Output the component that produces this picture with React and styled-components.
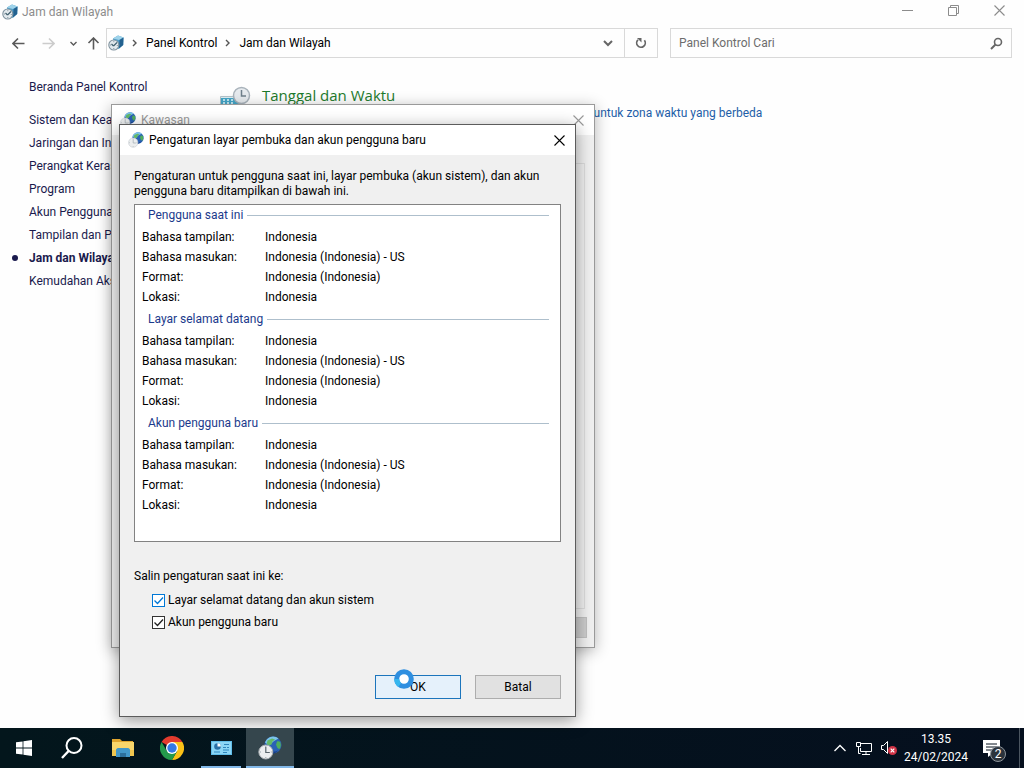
import React, { useState } from "react";
import styled, { createGlobalStyle } from "styled-components";

const sidebarLinks = [
  "Sistem dan Keamanan",
  "Jaringan dan Internet",
  "Perangkat Keras dan Suara",
  "Program",
  "Akun Pengguna",
  "Tampilan dan Personalisasi",
  "Jam dan Wilayah",
  "Kemudahan Akses",
];

const groups = ["Pengguna saat ini", "Layar selamat datang", "Akun pengguna baru"];

const settings = [
  ["Bahasa tampilan:", "Indonesia"],
  ["Bahasa masukan:", "Indonesia (Indonesia) - US"],
  ["Format:", "Indonesia (Indonesia)"],
  ["Lokasi:", "Indonesia"],
];

// Icons
const ClockBoxIcon = ({ size = 16 }) => (
  <svg width={size} height={size} viewBox="0 0 16 16" aria-hidden="true">
    <path d="M5 3.500 10 .5l5.500 2-.3 7.500L10.500 14 6 12z" fill="#4f9fca" />
    <path d="M5 3.500 10 .5l5.500 2L11 5z" fill="#9fd3ea" />
    <path d="m11.500 5 4-2.500-.3 7.500-4.200 3.500z" fill="#23618f" />
    <circle cx="5.800" cy="10" r="5" fill="#e3eaee" stroke="#7f929e" strokeWidth="1.100" />
    <path d="M5.500 11 9 7.500M5.500 11l-2-2" stroke="#42616f" strokeWidth="1.200" fill="none" />
    <path d="M5.800 6.200v1M5.800 13v1M2 10h1M8.800 10.500h1" stroke="#6c7f8a" strokeWidth=".8" />
  </svg>
);

const GlobeClockIcon = ({ size = 16, faded = false }) => (
  <svg width={size} height={size} viewBox="0 0 24 24" aria-hidden="true">
    <circle cx="15" cy="9" r="8.500" fill="#2b62b4" />
    <path d="M7 6.500C8.500 3 11.500.6 15 .5c2.500 0 4 .8 5.500 2L16 5l-5 4.500z" fill="#7cc4ea" />
    <path d="M9.500 4.500 14 2.500l3 1-2.500 2-1 3-2.500 1-2.500-1.500z" fill="#63b867" />
    <path d="M19 5.500c1.500-.5 2.500 0 3.300.8 1 2.700.5 5-1 7l-2-1.500-1.300-3z" fill="#4fae5c" />
    <path d="M12 14.500c3 1.500 6 1.500 8.500-.5-1.500 2.500-4 3.500-6.500 3.500z" fill="#173f8a" />
    <circle cx="7.800" cy="16" r="7" fill="#eceeef" stroke={faded ? "#cbd0d4" : "#a9aeb2"} />
    <path d="M7.800 11v5.500h4" stroke={faded ? "#a9b3b9" : "#59646b"} strokeWidth="1.200" fill="none" />
    <path d="M7.800 10v1M7.800 21v1M2 16h1M12.800 16h1" stroke="#9aa4aa" />
  </svg>
);

const DateTimeIcon = () => (
  <svg width="32" height="32" viewBox="0 0 32 32" aria-hidden="true">
    <path d="M1.500 16.500h20v12h-20z" fill="#dfeef3" stroke="#b3c3ca" />
    <path d="M2 18h19v6H2z" fill="#45a7c9" />
    <path d="M4 20h2M8 20h2M12 20h2M4 23h2M8 23h2M12 23h2" stroke="#e9fbff" strokeWidth="1.500" />
    <circle cx="22.500" cy="15.500" r="8" fill="#e6eaee" stroke="#a9b3bb" strokeWidth="1.500" />
    <path d="M22.500 10v6h4.500" stroke="#6f7f8b" strokeWidth="1.500" fill="none" />
  </svg>
);

const CloseIcon = () => (
  <svg width="11" height="11" viewBox="0 0 11 11" aria-hidden="true">
    <path d="m.5.500 10 10M10.500.500l-10 10" stroke="currentColor" strokeWidth="1.100" />
  </svg>
);

const ChevronIcon = ({ width = 2 }) => (
  <svg width="10" height="10" viewBox="0 0 10 10" aria-hidden="true">
    <path d="m1 3 4 4 4-4" fill="none" stroke="currentColor" strokeWidth={width} />
  </svg>
);

const CrumbIcon = () => (
  <svg width="6" height="8" viewBox="0 0 6 8" aria-hidden="true">
    <path d="m1 1 3 3-3 3" fill="none" stroke="#555" strokeWidth="1.400" />
  </svg>
);

const ArrowIcon = ({ turn = 0 }) => (
  <svg width="13" height="13" viewBox="0 0 13 13" aria-hidden="true">
    <path
      d="M12.500 6.500H1.500M6 1.500l-5 5 5 5"
      fill="none"
      stroke="currentColor"
      strokeWidth="1.600"
      transform={`rotate(${turn} 6.500 6.500)`}
    />
  </svg>
);

const WindowsIcon = () => (
  <svg width="16" height="16" viewBox="0 0 16 16" aria-hidden="true">
    <path d="M0 2.300 6.600 1.400v6.200H0zM7.400 1.300 16 0v7.600H7.400zM0 8.400h6.600v6.200L0 13.700zM7.400 8.400H16V16l-8.600-1.200z" fill="#fff" />
  </svg>
);

const TaskSearchIcon = () => (
  <svg width="22" height="22" viewBox="0 0 22 22" aria-hidden="true">
    <circle cx="13" cy="8.500" r="7.500" fill="none" stroke="#fff" strokeWidth="2" />
    <path d="M7.600 14 1 21" stroke="#fff" strokeWidth="2.400" />
  </svg>
);

const FolderIcon = () => (
  <svg width="22" height="20" viewBox="0 0 22 20" aria-hidden="true">
    <path d="M0 1h8l2 2h11v4H0z" fill="#e0a52e" />
    <path d="M0 4h22v14H0z" fill="#f9d66b" />
    <path d="M0 12h22v6H0z" fill="#f0c64f" />
    <path d="M4 19v-7c0-1 1-2 2-2h10c1 0 2 1 2 2v7h-4v-4H8v4z" fill="#4297c9" />
    <path d="M8 15h6v4H8z" fill="#2c6f9c" />
  </svg>
);

const ChromeIcon = () => (
  <svg width="24" height="24" viewBox="0 0 24 24" aria-hidden="true">
    <path d="M12 12 1.600 6A12 12 0 0 1 22.400 6z" fill="#e33b2e" />
    <path d="M12 12V6h10.400A12 12 0 0 1 12 24l5.200-9z" fill="#fbc117" />
    <path d="m12 12 5.200 3L12 24A12 12 0 0 1 1.600 6l5.200 9z" fill="#249a4b" />
    <circle cx="12" cy="12" r="6" fill="#fff" />
    <circle cx="12" cy="12" r="4.700" fill="#3479e6" />
  </svg>
);

const ControlPanelIcon = () => (
  <svg width="21" height="16" viewBox="0 0 21 16" aria-hidden="true">
    <path d="M0 1h21v14H0z" fill="#61bde9" />
    <path d="M1 2h19v12H1z" fill="#8bd6f6" />
    <circle cx="6.500" cy="6.500" r="3.300" fill="#2a70a6" />
    <path d="M6.500 6.500V3.200a3.300 3.300 0 0 1 3.300 3.300z" fill="#fff" />
    <path d="M13 4.500h5M12 7.500h3M3 12h6M16 7.500h2M12 10h6M12 12.500h4" stroke="#2f86bd" strokeWidth="1.200" />
  </svg>
);

const NetworkIcon = () => (
  <svg width="17" height="15" viewBox="0 0 17 15" aria-hidden="true">
    <path d="M4.500 2.500h11v8h-11V7M10 10.500v3M6 13.500h8" fill="none" stroke="#fff" />
    <path d="M.500 1.500h4v4h-4zM2.500 5.500v7h2" fill="#07131f" stroke="#fff" />
  </svg>
);

const MutedIcon = () => (
  <svg width="17" height="16" viewBox="0 0 17 16" aria-hidden="true">
    <path d="M.500 5.500h2l4-4v12l-4-4h-2z" fill="none" stroke="#fff" />
    <circle cx="11.500" cy="10.500" r="4.500" fill="#d13346" />
    <path d="m9.700 8.700 3.600 3.600M13.300 8.700l-3.600 3.600" stroke="#fff" strokeWidth="1.200" />
  </svg>
);

const NotesIcon = () => (
  <svg width="17" height="17" viewBox="0 0 17 17" aria-hidden="true">
    <path d="M0 0h17v13h-7l-5 4v-4H0z" fill="#fff" />
    <path d="M3 4h11M3 7h11M3 10h7" stroke="#07131f" />
  </svg>
);

const CheckMark = () => (
  <svg width="13" height="13" viewBox="0 0 13 13" aria-hidden="true">
    <path d="m2.500 6.500 3 3 5.500-6" fill="none" stroke="currentColor" strokeWidth="1.300" />
  </svg>
);

const App = () => {
  const [welcome, setWelcome] = useState(true);
  const [newUser, setNewUser] = useState(true);

  return (
    <Desktop>
      <GlobalStyle />
      <Explorer>
        <ExplorerTitle>
          <ClockBoxIcon />
          <span>Jam dan Wilayah</span>
          <Captions>
            <CaptionButton aria-label="Minimize">
              <svg width="11" height="11" viewBox="0 0 11 11">
                <path d="M0 5.500h11" stroke="currentColor" />
              </svg>
            </CaptionButton>
            <CaptionButton aria-label="Restore">
              <svg width="11" height="11" viewBox="0 0 11 11">
                <path d="M.500 2.500h8v8h-8zM2.500 2.500v-2h8v8h-2" fill="none" stroke="currentColor" />
              </svg>
            </CaptionButton>
            <CaptionButton aria-label="Close">
              <CloseIcon />
            </CaptionButton>
          </Captions>
        </ExplorerTitle>
        <NavBar>
          <NavButtons>
            <NavButton aria-label="Back">
              <ArrowIcon />
            </NavButton>
            <NavButton aria-label="Forward" $faded>
              <ArrowIcon turn={180} />
            </NavButton>
            <NavButton aria-label="Recent" $narrow>
              <svg width="7" height="7" viewBox="0 0 7 7">
                <path d="m.500 2 3 3 3-3" fill="none" stroke="currentColor" strokeWidth="1.400" />
              </svg>
            </NavButton>
            <NavButton aria-label="Up" $narrow>
              <ArrowIcon turn={90} />
            </NavButton>
          </NavButtons>
          <AddressBar>
            <Crumbs>
              <ClockBoxIcon />
              <CrumbIcon />
              <a href="#panel">Panel Kontrol</a>
              <CrumbIcon />
              <a href="#jam">Jam dan Wilayah</a>
            </Crumbs>
            <AddressButton aria-label="History">
              <ChevronIcon />
            </AddressButton>
            <AddressButton aria-label="Refresh" $divided>
              <svg width="12" height="12" viewBox="0 0 12 12">
                <path d="M9.400 3.300A4.300 4.300 0 1 1 3 2.800" fill="none" stroke="currentColor" strokeWidth="1.700" />
                <path d="M2 1h4.500v4.500z" fill="currentColor" />
              </svg>
            </AddressButton>
          </AddressBar>
          <SearchBox>
            <input aria-label="Panel Kontrol Cari" placeholder="Panel Kontrol Cari" />
            <svg width="13" height="13" viewBox="0 0 13 13">
              <circle cx="8" cy="5" r="3.500" fill="none" stroke="#666" strokeWidth="1.600" />
              <path d="M5.500 7.500 1 12" stroke="#666" strokeWidth="2" />
            </svg>
          </SearchBox>
        </NavBar>
        <ExplorerBody>
          <Sidebar>
            <SideLink href="#home">Beranda Panel Kontrol</SideLink>
            <SideList>
              {sidebarLinks.map((name) => (
                <li key={name}>
                  <SideLink href="#category" $current={name === "Jam dan Wilayah"}>
                    {name}
                  </SideLink>
                </li>
              ))}
            </SideList>
          </Sidebar>
          <Category>
            <DateTimeIcon />
            <div>
              <CategoryTitle href="#date">Tanggal dan Waktu</CategoryTitle>
              <Tasks>
                <a href="#set">Atur waktu dan tanggal</a>
                <a href="#zone">Ubah zona waktu</a>
                <a href="#clocks">Tambahkan jam untuk zona waktu yang berbeda</a>
              </Tasks>
            </div>
          </Category>
        </ExplorerBody>
      </Explorer>

      <RegionWindow>
        <DialogTitle $inactive>
          <GlobeClockIcon faded />
          <span>Kawasan</span>
          <CloseButton aria-label="Close">
            <CloseIcon />
          </CloseButton>
        </DialogTitle>
        <RegionBody>
          <TabPage />
          <RegionFooter>
            <PlainButton aria-label="Apply" $disabled />
          </RegionFooter>
        </RegionBody>
      </RegionWindow>

      <SettingsDialog role="dialog" aria-label="Pengaturan layar pembuka dan akun pengguna baru">
        <DialogTitle>
          <GlobeClockIcon faded />
          <span>Pengaturan layar pembuka dan akun pengguna baru</span>
          <CloseButton aria-label="Close">
            <CloseIcon />
          </CloseButton>
        </DialogTitle>
        <DialogBody>
          <p>
            Pengaturan untuk pengguna saat ini, layar pembuka (akun sistem), dan akun
            <br />
            pengguna baru ditampilkan di bawah ini.
          </p>
          <SettingsPanel>
            {groups.map((group) => (
              <Group key={group}>
                <GroupTitle>{group}</GroupTitle>
                <GroupList>
                  {settings.map(([label, value]) => (
                    <React.Fragment key={label}>
                      <dt>{label}</dt>
                      <dd>{value}</dd>
                    </React.Fragment>
                  ))}
                </GroupList>
              </Group>
            ))}
          </SettingsPanel>
          <p>Salin pengaturan saat ini ke:</p>
          <Checks>
            <CheckRow $hot>
              <input type="checkbox" checked={welcome} onChange={() => setWelcome(!welcome)} />
              <CheckMark />
              Layar selamat datang dan akun sistem
            </CheckRow>
            <CheckRow>
              <input type="checkbox" checked={newUser} onChange={() => setNewUser(!newUser)} />
              <CheckMark />
              Akun pengguna baru
            </CheckRow>
          </Checks>
          <DialogFooter>
            <PlainButton $primary>
              OK
              <BusyCursor width="20" height="20" viewBox="0 0 20 20" aria-hidden="true">
                <circle cx="10" cy="10" r="7.300" fill="#fff" stroke="#2f8fe0" strokeWidth="5" />
                <path d="M2.700 10a7.300 7.300 0 0 0 3 5.900" fill="none" stroke="#35b6ee" strokeWidth="5" />
              </BusyCursor>
            </PlainButton>
            <PlainButton>Batal</PlainButton>
          </DialogFooter>
        </DialogBody>
      </SettingsDialog>

      <Taskbar>
        <TaskButton aria-label="Start">
          <WindowsIcon />
        </TaskButton>
        <TaskButton aria-label="Search">
          <TaskSearchIcon />
        </TaskButton>
        <Pinned>
          <TaskButton aria-label="File Explorer">
            <FolderIcon />
          </TaskButton>
          <TaskButton aria-label="Chrome">
            <ChromeIcon />
          </TaskButton>
          <TaskButton aria-label="Control Panel" $running>
            <ControlPanelIcon />
          </TaskButton>
          <TaskButton aria-label="Region" $active>
            <GlobeClockIcon size={24} />
          </TaskButton>
        </Pinned>
        <Tray>
          <svg width="12" height="8" viewBox="0 0 12 8">
            <path d="m.500 7 5.500-5.500L11.500 7" fill="none" stroke="#fff" strokeWidth="1.300" />
          </svg>
          <NetworkIcon />
          <MutedIcon />
          <Clock>
            <span>13.35</span>
            <span>24/02/2024</span>
          </Clock>
          <Notifications aria-label="Notifications">
            <NotesIcon />
            <Badge>2</Badge>
          </Notifications>
        </Tray>
      </Taskbar>
    </Desktop>
  );
};

const GlobalStyle = createGlobalStyle`
  * {
    box-sizing: border-box;
  }
  body {
    margin: 0;
    font-family: Roboto, "Open Sans", sans-serif;
    font-size: 12px;
    line-height: 15px;
    color: #000;
  }
  button, input {
    font: inherit;
    color: inherit;
    padding: 0;
    border: 0;
    background: none;
  }
  a {
    color: inherit;
    text-decoration: none;
  }
  p, ul, dl, dd {
    margin: 0;
    padding: 0;
  }
  svg {
    display: block;
    flex: none;
  }
`;

const Desktop = styled.div`
  position: relative;
  display: flex;
  flex-direction: column;
  min-height: 100vh;
  overflow: hidden;
  background: #fff;
`;

const Explorer = styled.main`
  flex: 1;
  background: #fefefe;
`;

const ExplorerTitle = styled.header`
  display: flex;
  align-items: center;
  gap: 4px;
  height: 24px;
  padding-left: 2px;
  color: #8c8c8c;
`;

const Captions = styled.div`
  display: flex;
  margin-left: auto;
  margin-right: 2px;
  height: 24px;
`;

const CaptionButton = styled.button`
  display: flex;
  align-items: center;
  justify-content: center;
  width: 46px;
  height: 21px;
`;

const NavBar = styled.nav`
  display: flex;
  align-items: center;
  padding: 4px 12px 0 0;
`;

const NavButtons = styled.div`
  display: flex;
  width: 106px;
  padding-left: 3px;
`;

const NavButton = styled.button`
  display: flex;
  align-items: center;
  justify-content: center;
  width: ${(props) => (props.$narrow ? "20px" : "30px")};
  height: 28px;
  color: ${(props) => (props.$faded ? "#ccc" : "#5a5a5a")};
`;

const AddressBar = styled.div`
  display: flex;
  flex: 550;
  height: 30px;
  border: 1px solid #d9d9d9;
`;

const Crumbs = styled.div`
  display: flex;
  align-items: center;
  flex: 1;
  gap: 8px;
  padding-left: 1px;
`;

const AddressButton = styled.button`
  display: flex;
  align-items: center;
  justify-content: center;
  width: 33px;
  color: #666;
  border-left: ${(props) => (props.$divided ? "1px solid #d9d9d9" : "0")};
`;

const SearchBox = styled.label`
  display: flex;
  align-items: center;
  flex: 324;
  height: 30px;
  margin-left: 12px;
  padding: 0 8px;
  border: 1px solid #d9d9d9;
  input {
    flex: 1;
    min-width: 0;
    outline: 0;
  }
  input::placeholder {
    color: #6d6d6d;
    opacity: 1;
  }
`;

const ExplorerBody = styled.div`
  display: flex;
  padding-top: 22px;
`;

const Sidebar = styled.aside`
  width: 219px;
  padding-left: 29px;
`;

const SideList = styled.ul`
  list-style: none;
  padding-top: 18px;
  li {
    height: 23px;
  }
`;

const SideLink = styled.a`
  position: relative;
  color: #1a1a4d;
  font-weight: ${(props) => (props.$current ? 700 : 400)};
  &::before {
    content: "";
    display: ${(props) => (props.$current ? "block" : "none")};
    position: absolute;
    left: -17px;
    top: 4px;
    width: 6px;
    height: 6px;
    border-radius: 50%;
    background: #1a1a4d;
  }
`;

const Category = styled.section`
  display: flex;
  gap: 11px;
`;

const CategoryTitle = styled.a`
  display: block;
  padding-top: 4px;
  color: #1d7a2c;
  font-family: "Open Sans", "Noto Sans", sans-serif;
  font-size: 15px;
  line-height: 22px;
`;

const Tasks = styled.div`
  display: flex;
  gap: 14px;
  color: #1f5fa8;
  white-space: nowrap;
`;

const Dialog = styled.section`
  position: absolute;
  display: flex;
  flex-direction: column;
  background: #f0f0f0;
`;

const RegionWindow = styled(Dialog)`
  left: 111px;
  top: 104px;
  width: 484px;
  height: 544px;
  border: 1px solid #9a9a9a;
  box-shadow: 0 3px 14px rgba(0, 0, 0, 0.3);
`;

const SettingsDialog = styled(Dialog)`
  left: 119px;
  top: 124px;
  width: 457px;
  border: 1px solid #5c5c5c;
  box-shadow: 0 4px 16px rgba(0, 0, 0, 0.4);
`;

const DialogTitle = styled.header`
  display: flex;
  align-items: center;
  gap: 5px;
  height: 30px;
  padding: 0 10px 0 8px;
  background: #fff;
  color: ${(props) => (props.$inactive ? "#999" : "#000")};
`;

const CloseButton = styled.button`
  margin-left: auto;
`;

const RegionBody = styled.div`
  display: flex;
  flex-direction: column;
  flex: 1;
  padding: 28px 7px 9px;
`;

const TabPage = styled.div`
  flex: 1;
  margin-right: 2px;
  border: 1px solid #dcdcdc;
`;

const RegionFooter = styled.div`
  display: flex;
  justify-content: flex-end;
  padding-top: 8px;
`;

const DialogBody = styled.div`
  padding: 14px 14px 17px;
`;

const SettingsPanel = styled.div`
  min-height: 338px;
  margin: 5px 0 27px;
  padding: 0 11px 0 7px;
  background: #fff;
  border: 1px solid #828282;
`;

const Group = styled.section`
  padding-bottom: 2px;
`;

const GroupTitle = styled.div`
  display: flex;
  align-items: center;
  gap: 4px;
  height: 20px;
  margin-bottom: 2px;
  padding-left: 6px;
  color: #1b3a8c;
  &::after {
    content: "";
    flex: 1;
    height: 1px;
    background: #aebfcc;
  }
`;

const GroupList = styled.dl`
  display: grid;
  grid-template-columns: 123px 1fr;
  line-height: 20px;
`;

const Checks = styled.div`
  padding: 5px 0 42px 18px;
`;

const CheckRow = styled.label`
  position: relative;
  display: flex;
  align-items: center;
  gap: 3px;
  height: 22px;
  input {
    appearance: none;
    width: 13px;
    height: 13px;
    margin: 0;
    background: #fff;
    border: 1px solid ${(props) => (props.$hot ? "#0078d7" : "#333")};
  }
  svg {
    position: absolute;
    left: 0;
    color: ${(props) => (props.$hot ? "#0078d7" : "#222")};
  }
  input:not(:checked) + svg {
    display: none;
  }
`;

const DialogFooter = styled.div`
  display: flex;
  justify-content: flex-end;
  gap: 14px;
`;

const PlainButton = styled.button`
  position: relative;
  width: 86px;
  height: ${(props) => (props.$disabled ? "21px" : "24px")};
  background: ${(props) => (props.$disabled ? "#ccc" : props.$primary ? "#e5f1fb" : "#e1e1e1")};
  border: 1px solid ${(props) => (props.$primary ? "#1c75bc" : props.$disabled ? "#bfbfbf" : "#adadad")};
`;

const BusyCursor = styled.svg`
  position: absolute;
  left: 18px;
  top: -7px;
`;

const Taskbar = styled.footer`
  display: flex;
  height: 40px;
  background: linear-gradient(90deg, #03161c, #050f1e);
  color: #fff;
`;

const TaskButton = styled.button`
  display: flex;
  align-items: center;
  justify-content: center;
  width: 48px;
  height: 40px;
  background: ${(props) => (props.$active ? "#35464d" : "none")};
  position: relative;
  &::after {
    content: "";
    display: ${(props) => (props.$active || props.$running ? "block" : "none")};
    position: absolute;
    bottom: 0;
    left: ${(props) => (props.$active ? "0" : "4px")};
    right: ${(props) => (props.$active ? "0" : "4px")};
    height: 2px;
    background: #82b8e8;
  }
`;

const Pinned = styled.div`
  display: flex;
  gap: 1px;
  margin-left: 3px;
`;

const Tray = styled.div`
  display: flex;
  align-items: center;
  gap: 10px;
  margin-left: auto;
  margin-right: 4px;
  padding-right: 19px;
  border-right: 1px solid #4b5560;
  svg + svg {
    margin-right: -2px;
  }
`;

const Clock = styled.div`
  display: flex;
  flex-direction: column;
  align-items: center;
  width: 60px;
  line-height: 18px;
`;

const Notifications = styled.button`
  position: relative;
  margin-left: 7px;
`;

const Badge = styled.span`
  position: absolute;
  left: 7px;
  top: 6px;
  width: 16px;
  height: 16px;
  border: 1px solid #8d949b;
  border-radius: 50%;
  background: #2b333c;
  line-height: 14px;
  text-align: center;
`;

export default App;
